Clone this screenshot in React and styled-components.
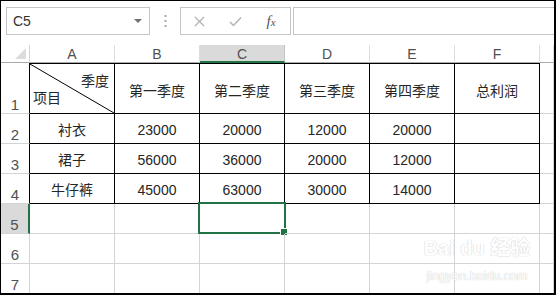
import React from "react";
import styled, { createGlobalStyle } from "styled-components";

const GlobalStyle = createGlobalStyle`
  html, body {
    margin: 0;
    padding: 0;
    background: #fff;
  }
  * {
    box-sizing: border-box;
  }
`;

const Window = styled.div`
  position: relative;
  width: 556px;
  height: 295px;
  border-top: 1px solid #000;
  border-left: 1px solid #000;
  border-right: 2px solid #000;
  border-bottom: 2px solid #000;
  background: #fff;
  overflow: hidden;
  font-family: "Liberation Sans", "Noto Sans CJK SC", sans-serif;
  color: #222;
`;

const FormulaBar = styled.div`
  display: flex;
  align-items: flex-start;
  height: 44px;
  padding: 6px 0 0 5px;
`;

const NameBox = styled.div`
  display: flex;
  align-items: center;
  justify-content: space-between;
  width: 144px;
  height: 28px;
  padding: 0 7px 0 6px;
  border: 1px solid #c6c6c6;
  font-size: 14px;
  color: #333;
`;

const Caret = styled.span`
  width: 0;
  height: 0;
  border-left: 4px solid transparent;
  border-right: 4px solid transparent;
  border-top: 4px solid #707070;
`;

const Grip = styled.div`
  display: flex;
  align-items: center;
  justify-content: center;
  width: 30px;
  height: 28px;
`;

const ButtonBox = styled.div`
  display: flex;
  align-items: center;
  width: 111px;
  height: 28px;
  border: 1px solid #c6c6c6;
`;

const BarButton = styled.span`
  display: flex;
  align-items: center;
  justify-content: center;
  width: 36px;
  height: 26px;
`;

const Fx = styled.span`
  font-family: "Liberation Serif", serif;
  font-style: italic;
  font-size: 15px;
  color: #555;
  & small {
    font-size: 11px;
  }
`;

const FormulaInput = styled.div`
  flex: 1;
  height: 28px;
  margin-left: 2px;
  border: 1px solid #c6c6c6;
  border-right: none;
`;

const Sheet = styled.div`
  display: grid;
  grid-template-columns: 29px repeat(6, 85px) 1fr;
  grid-template-rows: 18px 51px repeat(6, 30px);
`;

const Corner = styled.div`
  position: relative;
  border-right: 1px solid #d4d4d4;
  border-bottom: 1px solid #ababab;
  &::after {
    content: "";
    position: absolute;
    right: 3px;
    bottom: 3px;
    width: 0;
    height: 0;
    border-left: 11px solid transparent;
    border-bottom: 11px solid #dcdcdc;
  }
`;

const ColHead = styled.div`
  display: flex;
  align-items: center;
  justify-content: center;
  font-size: 14px;
  color: #505050;
  background: ${(p) => (p.$active ? "#dadada" : "#fff")};
  border-right: 1px solid ${(p) => (p.$active ? "#c4c4c4" : "#dedede")};
  border-bottom: ${(p) => (p.$active ? "2px solid #217346" : "1px solid #ababab")};
  padding-top: ${(p) => (p.$active ? "1px" : "0")};
`;

const RowHead = styled.div`
  display: flex;
  align-items: flex-end;
  justify-content: center;
  font-size: 15px;
  color: #505050;
  background: ${(p) => (p.$active ? "#dadada" : "#fff")};
  border-bottom: 1px solid #d4d4d4;
  border-right: ${(p) =>
    p.$active ? "2px solid #217346" : p.$table ? "1px solid #000" : "1px solid #d4d4d4"};
`;

const Cell = styled.div`
  position: relative;
  display: flex;
  align-items: ${(p) => (p.$title ? "center" : "flex-end")};
  justify-content: center;
  padding-bottom: ${(p) => (p.$title ? "0" : "5px")};
  padding-top: ${(p) => (p.$title ? "4px" : "0")};
  font-size: 14px;
  line-height: 16px;
  color: #262626;
  border-right: 1px solid ${(p) => (p.$table ? "#000" : "#d4d4d4")};
  border-bottom: 1px solid ${(p) => (p.$table ? "#000" : "#d4d4d4")};
  border-top: ${(p) => (p.$top ? "1px solid #000" : "none")};
`;

const DiagCell = styled(Cell)`
  display: block;
  padding: 0;
`;

const Diagonal = styled.svg`
  position: absolute;
  inset: 0;
  width: 100%;
  height: 100%;
`;

const DiagTop = styled.span`
  position: absolute;
  right: 5px;
  top: 9px;
  line-height: 16px;
`;

const DiagBottom = styled.span`
  position: absolute;
  left: 3px;
  bottom: 7px;
  line-height: 16px;
`;

const Selection = styled.div`
  position: absolute;
  top: -2px;
  left: -2px;
  right: -2px;
  bottom: -1px;
  border: 2px solid #217346;
  pointer-events: none;
  &::after {
    content: "";
    position: absolute;
    right: -4px;
    bottom: -4px;
    width: 6px;
    height: 6px;
    background: #217346;
    border: 1px solid #fff;
  }
`;

const Watermark = styled.div`
  position: absolute;
  left: 425px;
  top: 234px;
  width: 102px;
  display: flex;
  flex-direction: column;
  align-items: center;
  color: #fff;
  text-shadow: 0 0 1px #cfcfcf, 0 0 1px #cfcfcf;
  pointer-events: none;
`;

const WmLogo = styled.div`
  font-size: 20px;
  font-weight: bold;
  line-height: 26px;
  white-space: nowrap;
`;

const WmUrl = styled.div`
  font-size: 12.5px;
  line-height: 14px;
  margin-top: 8px;
  white-space: nowrap;
`;

const cols = ["A", "B", "C", "D", "E", "F", ""];

const data = [
  [null, "第一季度", "第二季度", "第三季度", "第四季度", "总利润"],
  ["衬衣", "23000", "20000", "12000", "20000", ""],
  ["裙子", "56000", "36000", "20000", "12000", ""],
  ["牛仔裤", "45000", "63000", "30000", "14000", ""],
];

const ROWS = 7;
const SEL_ROW = 5;
const SEL_COL = 2;

const App = () => {
  const cells = [];
  cells.push(<Corner key="corner" />);
  cols.forEach((c, i) =>
    cells.push(
      <ColHead key={"h" + i} $active={i === SEL_COL}>
        {c}
      </ColHead>
    )
  );

  for (let r = 1; r <= ROWS; r++) {
    const inTable = r <= data.length;
    cells.push(
      <RowHead key={"r" + r} $active={r === SEL_ROW} $table={inTable}>
        {r}
      </RowHead>
    );
    for (let c = 0; c < cols.length; c++) {
      const table = inTable && c < 6;
      const key = r + "-" + c;
      if (r === 1 && c === 0) {
        cells.push(
          <DiagCell key={key} $table $top>
            <Diagonal viewBox="0 0 84 49" preserveAspectRatio="none">
              <line x1="0" y1="0" x2="84" y2="49" stroke="#000" strokeWidth="1" />
            </Diagonal>
            <DiagTop>季度</DiagTop>
            <DiagBottom>项目</DiagBottom>
          </DiagCell>
        );
        continue;
      }
      const text = inTable && c < 6 ? data[r - 1][c] : "";
      cells.push(
        <Cell key={key} $table={table} $top={r === 1 && table} $title={r === 1}>
          {text}
          {r === SEL_ROW && c === SEL_COL && <Selection />}
        </Cell>
      );
    }
  }

  return (
    <>
      <GlobalStyle />
      <Window>
        <FormulaBar>
          <NameBox>
            C5
            <Caret />
          </NameBox>
          <Grip>
            <svg width="3" height="12" viewBox="0 0 3 12">
              <rect x="0.5" y="0" width="2" height="2" fill="#a8a8a8" />
              <rect x="0.5" y="5" width="2" height="2" fill="#a8a8a8" />
              <rect x="0.5" y="10" width="2" height="2" fill="#a8a8a8" />
            </svg>
          </Grip>
          <ButtonBox>
            <BarButton>
              <svg width="11" height="11" viewBox="0 0 11 11">
                <path d="M1 1 L10 10 M10 1 L1 10" stroke="#b4b4b4" strokeWidth="1.4" />
              </svg>
            </BarButton>
            <BarButton>
              <svg width="13" height="11" viewBox="0 0 13 11">
                <path d="M1 6 L4.5 9.5 L12 1.5" stroke="#b4b4b4" strokeWidth="1.5" fill="none" />
              </svg>
            </BarButton>
            <BarButton>
              <Fx>
                f<small>x</small>
              </Fx>
            </BarButton>
          </ButtonBox>
          <FormulaInput />
        </FormulaBar>
        <Sheet>{cells}</Sheet>
        <Watermark>
          <WmLogo>Bai du 经验</WmLogo>
          <WmUrl>jingyan.baidu.com</WmUrl>
        </Watermark>
      </Window>
    </>
  );
};

export default App;
